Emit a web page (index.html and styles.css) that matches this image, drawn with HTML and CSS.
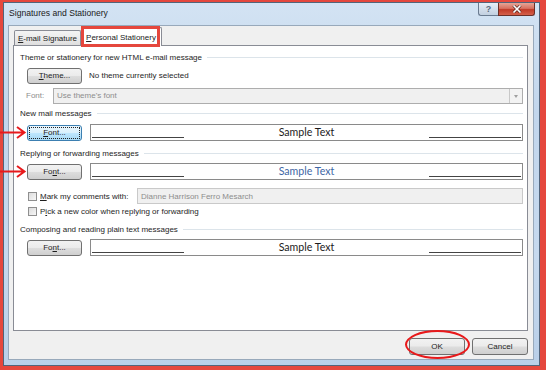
FILE: index.html
```html
<!DOCTYPE html>
<html lang="en">

<head>
    <meta charset="UTF-8">
    <title>Signatures and Stationery</title>
    <link rel="stylesheet" href="styles.css">
</head>

<body>
    <div class="shot">
        <div class="window">
            <div class="titlebar">
                <span class="title">Signatures and Stationery</span>
                <div class="caption">
                    <span class="cap help">?</span>
                    <span class="cap close">
                        <svg width="10" height="8" viewBox="0 0 10 8">
                            <path d="M1.5 0.5 L8.5 7.5 M8.5 0.5 L1.5 7.5" stroke="#5b2a22" stroke-width="3" />
                            <path d="M1.5 0.5 L8.5 7.5 M8.5 0.5 L1.5 7.5" stroke="#fff" stroke-width="1.6" />
                        </svg>
                    </span>
                </div>
            </div>
            <div class="client">
                <div class="tabs">
                    <span class="tab"><u>E</u>-mail Signature</span>
                    <span class="tab active"><u>P</u>ersonal Stationery</span>
                </div>
                <div class="panel">
                    <div class="group-title g1"><span>Theme or stationery for new HTML e-mail message</span></div>
                    <div class="row theme-row">
                        <span class="btn"><u>T</u>heme...</span>
                        <span class="note">No theme currently selected</span>
                    </div>
                    <div class="row font-row">
                        <span class="dim-label">Font:</span>
                        <div class="combo">
                            <span>Use theme's font</span>
                            <span class="drop"></span>
                        </div>
                    </div>

                    <div class="group-title g2"><span>New mail messages</span></div>
                    <div class="row sample-row r1">
                        <span class="btn focus"><span><u>F</u>ont...</span></span>
                        <div class="sample">
                            <span class="rule"></span>
                            <span class="sample-text">Sample Text</span>
                            <span class="rule"></span>
                        </div>
                    </div>

                    <div class="group-title g3"><span>Replying or forwarding messages</span></div>
                    <div class="row sample-row r2">
                        <span class="btn">Fo<u>n</u>t...</span>
                        <div class="sample">
                            <span class="rule"></span>
                            <span class="sample-text blue">Sample Text</span>
                            <span class="rule"></span>
                        </div>
                    </div>
                    <div class="row check-row c1">
                        <span class="check"></span>
                        <span class="check-label"><u>M</u>ark my comments with:</span>
                        <span class="textbox">Dianne Harrison Ferro Mesarch</span>
                    </div>
                    <div class="row check-row c2">
                        <span class="check"></span>
                        <span class="check-label">P<u>i</u>ck a new color when replying or forwarding</span>
                    </div>

                    <div class="group-title g4"><span>Composing and reading plain text messages</span></div>
                    <div class="row sample-row r3">
                        <span class="btn">Fo<u>n</u>t...</span>
                        <div class="sample">
                            <span class="rule"></span>
                            <span class="sample-text">Sample Text</span>
                            <span class="rule"></span>
                        </div>
                    </div>
                </div>
                <div class="footer">
                    <span class="btn wide">OK</span>
                    <span class="btn wide">Cancel</span>
                </div>
            </div>
        </div>

        <!-- annotations drawn over the screenshot -->
        <span class="mark tab-mark"></span>
        <span class="mark ok-mark"></span>
        <svg class="arrow a1" width="27" height="13" viewBox="0 0 27 13">
            <path d="M0 6.5 H24 M17 1 L24.5 6.5 L17 12" fill="none" stroke="#e8191b" stroke-width="2" />
        </svg>
        <svg class="arrow a2" width="27" height="13" viewBox="0 0 27 13">
            <path d="M0 6.5 H24 M17 1 L24.5 6.5 L17 12" fill="none" stroke="#e8191b" stroke-width="2" />
        </svg>
    </div>
</body>

</html>
```

FILE: styles.css
```css
* {
    padding: 0;
    margin: 0;
    box-sizing: border-box;
}

body {
    width: 546px;
    height: 370px;
    overflow: hidden;
    background: #e5473d;
    font-family: "Liberation Sans", Arial, sans-serif;
    font-size: 8px;
    color: #1e1e1e;
}

u {
    text-decoration: underline;
    text-underline-offset: 1px;
}

.shot {
    position: relative;
    width: 546px;
    height: 370px;
    padding: 2px 6px 4px 3px;
    background: #e5473d;
}

/* window frame */
.window {
    height: 100%;
    display: flex;
    flex-direction: column;
    border: 1px solid #52647a;
    background: linear-gradient(180deg, #d3e3f3 0%, #c2d6ec 30%, #c6d9ee 70%, #b9cfe8 100%);
}

.titlebar {
    height: 22px;
    display: flex;
    justify-content: space-between;
    align-items: flex-start;
}

.title {
    padding: 5px 0 0 5px;
    font-size: 8.6px;
    color: #1a1a1a;
}

.caption {
    display: flex;
    margin-right: 4px;
}

.cap {
    height: 13px;
    display: flex;
    align-items: center;
    justify-content: center;
    border: 1px solid #6a7b90;
    border-top: 0;
}

.help {
    width: 20px;
    border-right: 0;
    border-radius: 0 0 0 3px;
    background: linear-gradient(180deg, #e6eef7 0%, #d3deeb 50%, #c2d0e0 100%);
    color: #58697d;
    font-size: 9px;
    font-weight: bold;
}

.close {
    width: 37px;
    border-color: #6b2f27;
    border-radius: 0 0 3px 0;
    background: linear-gradient(180deg, #e5a597 0%, #d8705f 45%, #c13a27 55%, #d4604a 100%);
}

.client {
    flex: 1;
    display: flex;
    flex-direction: column;
    margin: 0 5px 5px 4px;
    padding: 1px 5px 0 4px;
    background: #f0f0f0;
    border: 1px solid #98a9bb;
}

/* tabs */
.tabs {
    height: 18px;
    display: flex;
    align-items: flex-end;
    padding-left: 1px;
}

.tab {
    width: 67px;
    height: 15px;
    display: flex;
    align-items: center;
    justify-content: center;
    border: 1px solid #898c95;
    border-bottom: 0;
    border-radius: 2px 2px 0 0;
    background: linear-gradient(180deg, #f3f3f3 0%, #ebebeb 50%, #dedede 100%);
    color: #222;
}

.tab.active {
    width: 81px;
    height: 19px;
    margin-bottom: -1px;
    border-left: 0;
    background: #fff;
    position: relative;
}

.panel {
    flex: 1;
    display: flex;
    flex-direction: column;
    padding: 5px 4px 0 6px;
    background: #fff;
    border: 1px solid #898c95;
}

.group-title {
    height: 12px;
    display: flex;
    align-items: center;
    gap: 5px;
    color: #1e1e1e;
}

.group-title::after {
    content: "";
    flex: 1;
    height: 1px;
    background: #dce4ea;
}

.g2 { margin-top: 3px; }
.g3 { margin-top: 6px; }
.g4 { margin-top: 6px; }

.row {
    height: 17px;
    display: flex;
    align-items: center;
    padding-left: 7px;
}

.theme-row { margin-top: 4px; }
.font-row { margin-top: 3px; padding-left: 6px; }
.r1, .r2, .r3 { margin-top: 4px; }
.r1 { margin-top: 5px; }
.c1 { margin-top: 8px; height: 16px; padding-left: 8px; }
.c2 { margin-top: 2px; height: 11px; padding-left: 8px; }

/* buttons */
.btn {
    width: 55px;
    height: 16px;
    display: flex;
    align-items: center;
    justify-content: center;
    border: 1px solid #707070;
    border-radius: 3px;
    background: linear-gradient(180deg, #f2f2f2 0%, #ebebeb 48%, #dddddd 52%, #cfcfcf 100%);
    color: #1e1e1e;
}

.btn.focus {
    border-color: #3c7fb1;
    background: linear-gradient(180deg, #eaf6fd 0%, #d9f0fc 48%, #bee6fd 52%, #a7d9f5 100%);
    padding: 2px;
}

.btn.focus > span {
    flex: 1;
    align-self: stretch;
    display: flex;
    align-items: center;
    justify-content: center;
    outline: 1px dotted #222;
}

.btn.wide {
    width: 56px;
    height: 17px;
}

.note {
    margin-left: 7px;
}

.dim-label {
    width: 27px;
    color: #8d8d8d;
}

.combo {
    flex: 1;
    height: 16px;
    display: flex;
    align-items: center;
    justify-content: space-between;
    padding-left: 3px;
    border: 1px solid #adadad;
    background: #f0f0f0;
    color: #8d8d8d;
}

.drop {
    width: 13px;
    height: 14px;
    border-left: 1px solid #c8c8c8;
    background: #f3f3f3;
    position: relative;
}

.drop::after {
    content: "";
    position: absolute;
    left: 4px;
    top: 6px;
    border-left: 2.5px solid transparent;
    border-right: 2.5px solid transparent;
    border-top: 3px solid #a0a0a0;
}

/* sample text boxes */
.sample {
    flex: 1;
    height: 17px;
    margin-left: 8px;
    display: flex;
    padding: 0 1px;
    border: 1px solid #8a8a8a;
    background: #fff;
}

.rule {
    width: 92px;
    height: 1px;
    align-self: flex-end;
    margin-bottom: 2px;
    background: #444;
}

.sample-text {
    flex: 1;
    text-align: center;
    font-family: Lato, "Liberation Sans", sans-serif;
    font-size: 10.6px;
    line-height: 15px;
    color: #1b1b1b;
}

.sample-text.blue {
    color: #3e66a4;
}

/* checkboxes */
.check {
    width: 9px;
    height: 9px;
    border: 1px solid #8f8f8f;
    background: linear-gradient(135deg, #dcdcdc 0%, #f7f7f7 100%);
}

.check-label {
    margin-left: 3px;
}

.textbox {
    width: 386px;
    height: 16px;
    margin-left: auto;
    display: flex;
    align-items: center;
    padding-left: 3px;
    border: 1px solid #c9c9c9;
    background: #f0f0f0;
    color: #8d8d8d;
}

.footer {
    height: 28px;
    display: flex;
    justify-content: flex-end;
    align-items: flex-start;
    gap: 7px;
    padding: 7px 0 0 0;
}

/* annotations */
.mark {
    position: absolute;
    border: 3px solid #e5473d;
}

.tab-mark {
    left: 81px;
    top: 26px;
    width: 79px;
    height: 21px;
}

.ok-mark {
    left: 405px;
    top: 330px;
    width: 65px;
    height: 29px;
    border: 2px solid #e8191b;
    border-radius: 50%;
}

.arrow {
    position: absolute;
    left: 0;
}

.a1 { top: 126px; }
.a2 { top: 165px; }
```
